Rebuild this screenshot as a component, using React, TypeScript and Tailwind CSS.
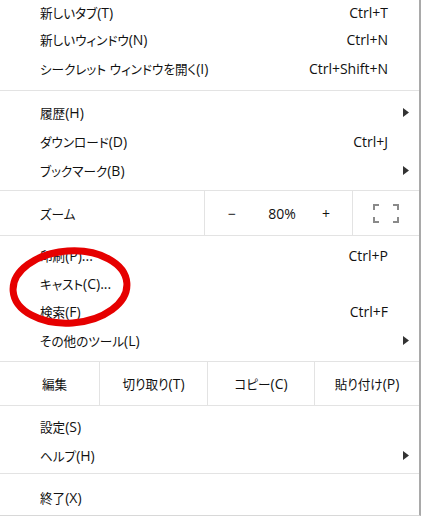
import React from "react";

const Arrow = () => (
  <svg width="6" height="9" viewBox="0 0 6 9" className="block">
    <path d="M0 0 L6 4.5 L0 9 Z" fill="#333" />
  </svg>
);

const T = ({ s }: { s: string }) => {
  const parts = s.match(/[\x00-\x7F]+|[^\x00-\x7F]+/g) || [];
  return (
    <span className="whitespace-nowrap">
      {parts.map((p, i) =>
        /^[\x00-\x7F]+$/.test(p) ? (
          <span key={i} className="text-[14px] [font-family:'Open_Sans',sans-serif]">{p}</span>
        ) : (
          <span key={i} className="text-[12.6px] [font-family:'Noto_Sans_CJK_JP',sans-serif] [font-feature-settings:'palt']">{p}</span>
        )
      )}
    </span>
  );
};

type RowProps = { label: string; shortcut?: string; arrow?: boolean; h?: string };

const Row = ({ label, shortcut, arrow, h = "h-[29px]" }: RowProps) => (
  <div className={`flex items-center pl-[40px] ${h}`}>
    <span className="flex-1"><T s={label} /></span>
    {shortcut && <T s={shortcut} />}
    <span className="w-[31px] flex justify-end pr-[10px]">{arrow && <Arrow />}</span>
  </div>
);

const Sep = ({ cls }: { cls: string }) => <div className={`h-px bg-[#e3e3e3] ${cls}`} />;

export default function App() {
  return (
    <div className="relative w-[423px] h-[516px] bg-white overflow-hidden text-[14px] leading-normal text-[#111] [font-family:'Open_Sans','Noto_Sans_CJK_JP',sans-serif]">
      <div className="w-[421px] h-[516px] border-r-2 border-r-[#a9a9a9] border-b border-b-[#d8d8d8]">
        <Row label="新しいタブ(T)" shortcut="Ctrl+T" h="h-[25px]" />
        <Row label="新しいウィンドウ(N)" shortcut="Ctrl+N" />
        <Row label="シークレット ウィンドウを開く(I)" shortcut="Ctrl+Shift+N" />
        <Sep cls="mt-[7px] mb-[7px]" />
        <Row label="履歴(H)" arrow />
        <Row label="ダウンロード(D)" shortcut="Ctrl+J" />
        <Row label="ブックマーク(B)" arrow h="h-[28px]" />
        <Sep cls="mt-[6px]" />
        <div className="flex h-[44px] items-stretch">
          <div className="w-[204px] flex items-center pl-[40px]"><T s="ズーム" /></div>
          <div className="w-px bg-[#e3e3e3]" />
          <div className="w-[147px] flex items-center">
            <span className="w-[52px] text-right pr-[21px]">−</span>
            <span className="w-[50px] text-center">80%</span>
            <span className="w-[38px] text-center">+</span>
          </div>
          <div className="w-px bg-[#e3e3e3]" />
          <div className="flex-1 flex items-center justify-center pr-[1px]">
            <svg width="26" height="19" viewBox="0 0 26 19">
              <g stroke="#8a8a8a" strokeWidth="2" fill="none">
                <path d="M1 6 V1 H6" />
                <path d="M20 1 H25 V6" />
                <path d="M25 13 V18 H20" />
                <path d="M6 18 H1 V13" />
              </g>
            </svg>
          </div>
        </div>
        <Sep cls="mb-[5px]" />
        <Row label="印刷(P)..." shortcut="Ctrl+P" h="h-[28px]" />
        <Row label="キャスト(C)..." h="h-[28px]" />
        <Row label="検索(F)" shortcut="Ctrl+F" />
        <Row label="その他のツール(L)" arrow h="h-[28px]" />
        <Sep cls="mt-[7px]" />
        <div className="flex h-[43px] items-stretch">
          <div className="w-[99px] flex items-center justify-center pl-[10px]"><T s="編集" /></div>
          <div className="w-px bg-[#e3e3e3]" />
          <div className="w-[107px] flex items-center justify-center"><T s="切り取り(T)" /></div>
          <div className="w-px bg-[#e3e3e3]" />
          <div className="w-[106px] flex items-center justify-center"><T s="コピー(C)" /></div>
          <div className="w-px bg-[#e3e3e3]" />
          <div className="flex-1 flex items-center justify-center"><T s="貼り付け(P)" /></div>
        </div>
        <Sep cls="mb-[6px]" />
        <Row label="設定(S)" />
        <Row label="ヘルプ(H)" arrow h="h-[28px]" />
        <Sep cls="mt-[4px] mb-[9px]" />
        <Row label="終了(X)" h="h-[28px]" />
      </div>
      <svg className="absolute left-0 top-0 pointer-events-none" width="423" height="516">
        <ellipse cx="70" cy="287" rx="57" ry="36" fill="none" stroke="#e60000" strokeWidth="7" transform="rotate(-4 70 287)" />
      </svg>
    </div>
  );
}
